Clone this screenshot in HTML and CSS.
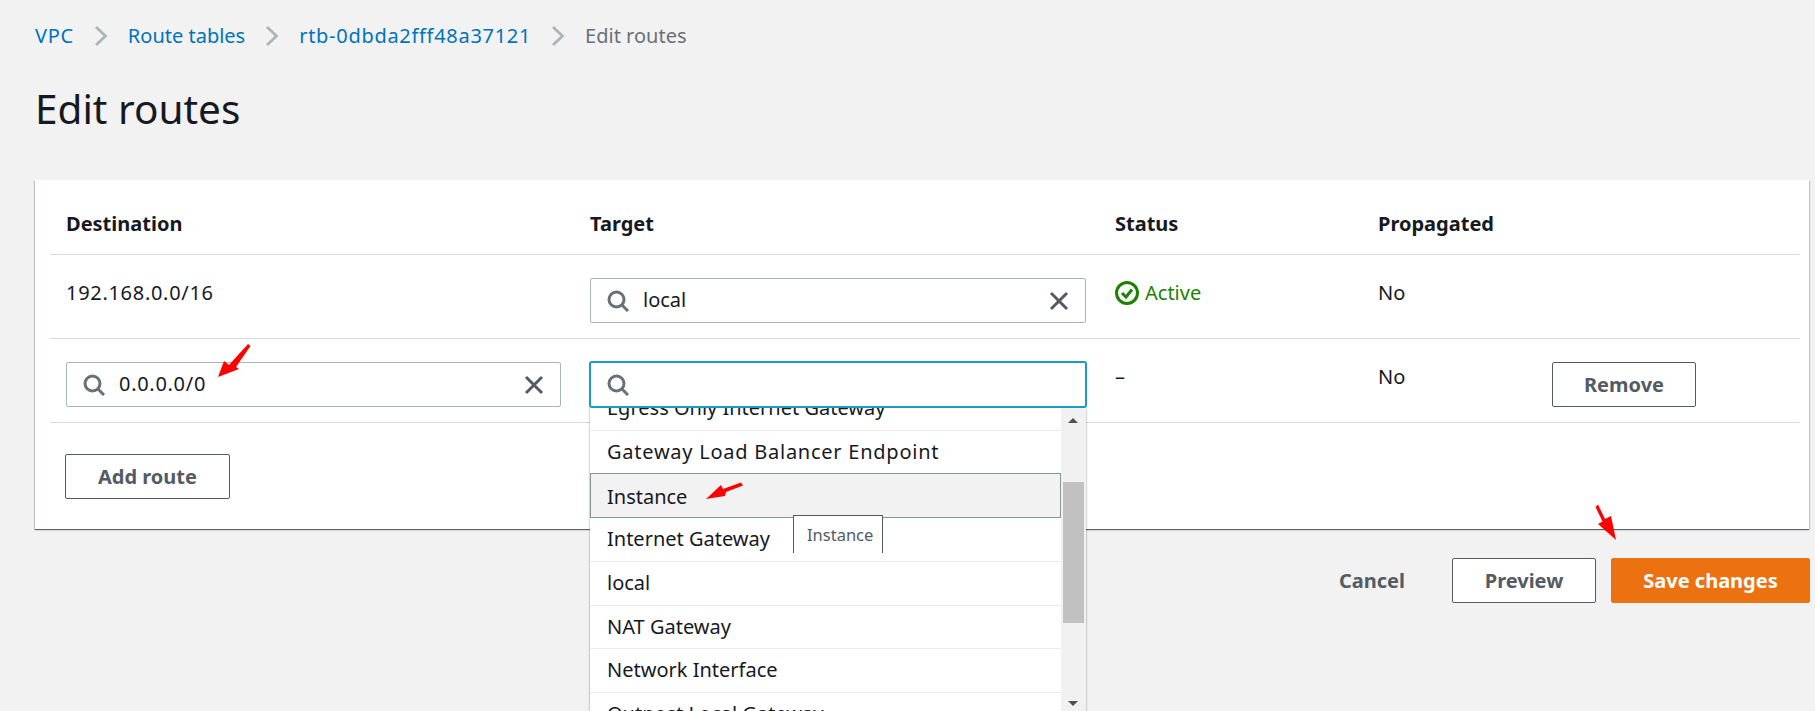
FILE: index.html
```html
<!DOCTYPE html>
<html lang="en">
<head>
    <meta charset="UTF-8">
    <title>Edit routes</title>
    <link rel="stylesheet" href="styles.css">
</head>
<body>
    <svg class="icon-defs" width="0" height="0">
        <symbol id="search" viewBox="0 0 22 22"><circle cx="9.5" cy="9.5" r="7.5" fill="none" stroke="#687078" stroke-width="3"/><path d="M15 15l6 6" fill="none" stroke="#687078" stroke-width="3"/></symbol>
        <symbol id="clear" viewBox="0 0 20 20"><path d="M2 2l16 16M18 2L2 18" fill="none" stroke="#545b64" stroke-width="3"/></symbol>
        <symbol id="chevron" viewBox="0 0 14 20"><path d="M2 1l9.5 9L2 19" fill="none" stroke="#aab7b8" stroke-width="2.800"/></symbol>
    </svg>

    <div class="page">
        <nav class="breadcrumb">
            <a href="#" class="num">VPC</a>
            <svg class="chevron"><use href="#chevron"/></svg>
            <a href="#">Route tables</a>
            <svg class="chevron"><use href="#chevron"/></svg>
            <a href="#" class="num">rtb-0dbda2fff48a37121</a>
            <svg class="chevron"><use href="#chevron"/></svg>
            <span>Edit routes</span>
        </nav>

        <h1>Edit routes</h1>

        <section class="card">
            <div class="row row-head">
                <div>Destination</div>
                <div>Target</div>
                <div>Status</div>
                <div>Propagated</div>
                <div></div>
            </div>

            <div class="row">
                <div class="num">192.168.0.0/16</div>
                <div>
                    <div class="search-box">
                        <svg class="search-icon"><use href="#search"/></svg>
                        <span class="search-text">local</span>
                        <svg class="clear-icon"><use href="#clear"/></svg>
                    </div>
                </div>
                <div class="status-active">
                    <svg class="check-icon" viewBox="0 0 24 24"><circle cx="12" cy="12" r="10.500" fill="none" stroke="#1d8102" stroke-width="3"/><path d="M7 12l4 4 6-7.500" fill="none" stroke="#1d8102" stroke-width="3"/></svg>
                    Active
                </div>
                <div>No</div>
                <div></div>
            </div>

            <div class="row">
                <div>
                    <div class="search-box">
                        <svg class="search-icon"><use href="#search"/></svg>
                        <span class="search-text num">0.0.0.0/0</span>
                        <svg class="clear-icon"><use href="#clear"/></svg>
                    </div>
                </div>
                <div class="target-cell">
                    <div class="search-box focused">
                        <svg class="search-icon"><use href="#search"/></svg>
                    </div>

                    <!-- open dropdown, runs off the bottom of the window -->
                    <div class="dropdown">
                        <ul class="options">
                            <li class="first">Egress Only Internet Gateway</li>
                            <li class="wide">Gateway Load Balancer Endpoint</li>
                            <li class="hovered">Instance</li>
                            <li>Internet Gateway</li>
                            <li>local</li>
                            <li>NAT Gateway</li>
                            <li>Network Interface</li>
                            <li>Outpost Local Gateway</li>
                        </ul>
                        <div class="scrollbar">
                            <span class="arrow-up"></span>
                            <span class="thumb"></span>
                            <span class="arrow-down"></span>
                        </div>
                        <div class="tooltip">Instance</div>
                    </div>
                </div>
                <div>–</div>
                <div>No</div>
                <div><button class="btn btn-remove">Remove</button></div>
            </div>

            <div class="card-bottom">
                <button class="btn btn-add">Add route</button>
            </div>
        </section>

        <div class="actions">
            <button class="btn-link">Cancel</button>
            <button class="btn btn-preview">Preview</button>
            <button class="btn btn-save">Save changes</button>
        </div>
    </div>

    <!-- red annotations drawn over the screenshot -->
    <svg class="mark mark-dest" viewBox="0 0 34 35"><path d="M1 34L7 18 12 22 31 1 33.500 3 19 24 22 26z" fill="#ff0000"/></svg>
    <svg class="mark mark-instance" viewBox="0 0 40 18"><path d="M1 17L16 3 18 7 36 .5 38 3.500 21 10 20 14z" fill="#ff0000"/></svg>
    <svg class="mark mark-save" viewBox="0 0 22 37"><path d="M3 .5L10 15 16 12 21 36 3 20 7.500 17.500 .5 3z" fill="#ff0000"/></svg>
</body>
</html>
```

FILE: styles.css
```css
* {
    box-sizing: border-box;
}
html, body {
    height: 711px;
    overflow: hidden;
}
body {
    margin: 0;
    background-color: #f2f2f2;
    color: #16191f;
    font-family: "Noto Sans", sans-serif;
    font-size: 20px;
    line-height: 28px;
    position: relative;
}
.icon-defs {
    display: block;
    height: 0;
}
.page {
    padding: 22px 6px 0 35px;
}
.num {
    letter-spacing: 0.7px;
}

/* breadcrumb */
.breadcrumb {
    display: flex;
    align-items: center;
    height: 28px;
    gap: 20px;
}
.breadcrumb a {
    color: #0073bb;
    text-decoration: none;
}
.breadcrumb span {
    color: #687078;
}
.chevron {
    width: 14px;
    height: 20px;
}

h1 {
    margin: 34px 0 0 0;
    font-size: 40.5px;
    line-height: 50px;
    font-weight: 400;
    height: 96px;
}

/* routes card */
.card {
    background-color: #fff;
    height: 349px;
    padding: 0 9px 0 15px;
    box-shadow: 0 1px 1px 0 rgba(0,28,36,0.5), 1px 1px 1px 0 rgba(0,28,36,0.15), -1px 1px 1px 0 rgba(0,28,36,0.15);
}
.row {
    display: grid;
    grid-template-columns: 524px 525px 263px 174px 1fr;
    padding: 23px 0 14px 16px;
    height: 84px;
    line-height: 30px;
    border-bottom: 1px solid #d5dbdb;
}
.row-head {
    padding-top: 30px;
    height: 75px;
    line-height: 28px;
    font-weight: 700;
}
.status-active {
    display: flex;
    align-items: center;
    align-self: start;
    gap: 6px;
    color: #1d8102;
}
.check-icon {
    width: 24px;
    height: 24px;
}

/* search inputs */
.search-box {
    display: flex;
    align-items: center;
    width: 496px;
    height: 45px;
    padding: 0 16px;
    background-color: #fff;
    border: 1px solid #aab7b8;
    border-radius: 2px;
}
.row > div:first-child .search-box {
    width: 495px;
}
.search-icon {
    width: 22px;
    height: 22px;
    flex: none;
    margin-right: 14px;
}
.search-text {
    flex: 1;
    line-height: 28px;
    padding-bottom: 2px;
}
.clear-icon {
    width: 20px;
    height: 20px;
}
.focused {
    margin: -1px 0 0 -1px;
    height: 47px;
    width: 498px;
    border: 2px solid #1a9cbf;
    border-radius: 3px;
    position: relative;
    z-index: 3;
}
.target-cell {
    position: relative;
}

/* dropdown */
.dropdown {
    position: absolute;
    top: 46px;
    left: 0;
    width: 496px;
    height: 303px;
    background-color: #fff;
    overflow: hidden;
    display: flex;
    z-index: 2;
    line-height: 28px;
    box-shadow: 0 0 2px rgba(0,28,36,0.5);
}
.options {
    list-style: none;
    margin: 0;
    padding: 0;
    width: 471px;
    flex: none;
}
.options li {
    height: 43.7px;
    padding: 7px 16px 0 17px;
    border-bottom: 1px solid #eaeded;
    white-space: nowrap;
}
.options .first {
    margin-top: -21px;
}
.options .wide {
    letter-spacing: 0.75px;
}
.options .hovered {
    background-color: #f2f2f2;
    border: 1px solid #879596;
    height: 45px;
    margin-top: -1px;
    padding-left: 16px;
    padding-top: 9px;
}
.scrollbar {
    flex: 1;
    background-color: #f1f1f1;
    position: relative;
}
.thumb {
    position: absolute;
    left: 2px;
    top: 74px;
    width: 21px;
    height: 141px;
    background-color: #c1c1c1;
}
.arrow-up, .arrow-down {
    position: absolute;
    left: 7px;
    width: 0;
    height: 0;
    border-left: 5px solid transparent;
    border-right: 5px solid transparent;
}
.arrow-up {
    top: 10px;
    border-bottom: 5px solid #505050;
}
.arrow-down {
    bottom: 5px;
    border-top: 5px solid #505050;
}
.tooltip {
    position: absolute;
    left: 203px;
    top: 107px;
    width: 90px;
    height: 38px;
    padding: 5px 0 0 13px;
    background-color: #fff;
    border: 1px solid #545b64;
    border-bottom: none;
    color: #545b64;
    font-size: 16.5px;
}

/* buttons */
.btn {
    height: 45px;
    padding: 0;
    background-color: #fff;
    border: 1px solid #545b64;
    border-radius: 2px;
    color: #545b64;
    font-family: inherit;
    font-size: 20px;
    font-weight: 700;
}
.btn-remove {
    width: 144px;
}
.btn-add {
    width: 165px;
}
.card-bottom {
    padding: 31px 0 0 15px;
}
.actions {
    display: flex;
    justify-content: flex-end;
    align-items: center;
    margin: 29px 0 0 0;
    gap: 15px;
}
.btn-link {
    padding: 0;
    margin-right: 32px;
    background: none;
    border: none;
    color: #545b64;
    font-family: inherit;
    font-size: 20px;
    font-weight: 700;
}
.btn-preview {
    width: 144px;
}
.btn-save {
    width: 199px;
    margin-right: -1px;
    background-color: #ec7211;
    border-color: #ec7211;
    color: #fff;
}

/* annotation arrows */
.mark {
    position: absolute;
    z-index: 5;
}
.mark-dest {
    left: 217px;
    top: 343px;
    width: 34px;
    height: 35px;
}
.mark-instance {
    left: 705px;
    top: 482px;
    width: 40px;
    height: 18px;
}
.mark-save {
    left: 1595px;
    top: 504px;
    width: 22px;
    height: 37px;
}
```
